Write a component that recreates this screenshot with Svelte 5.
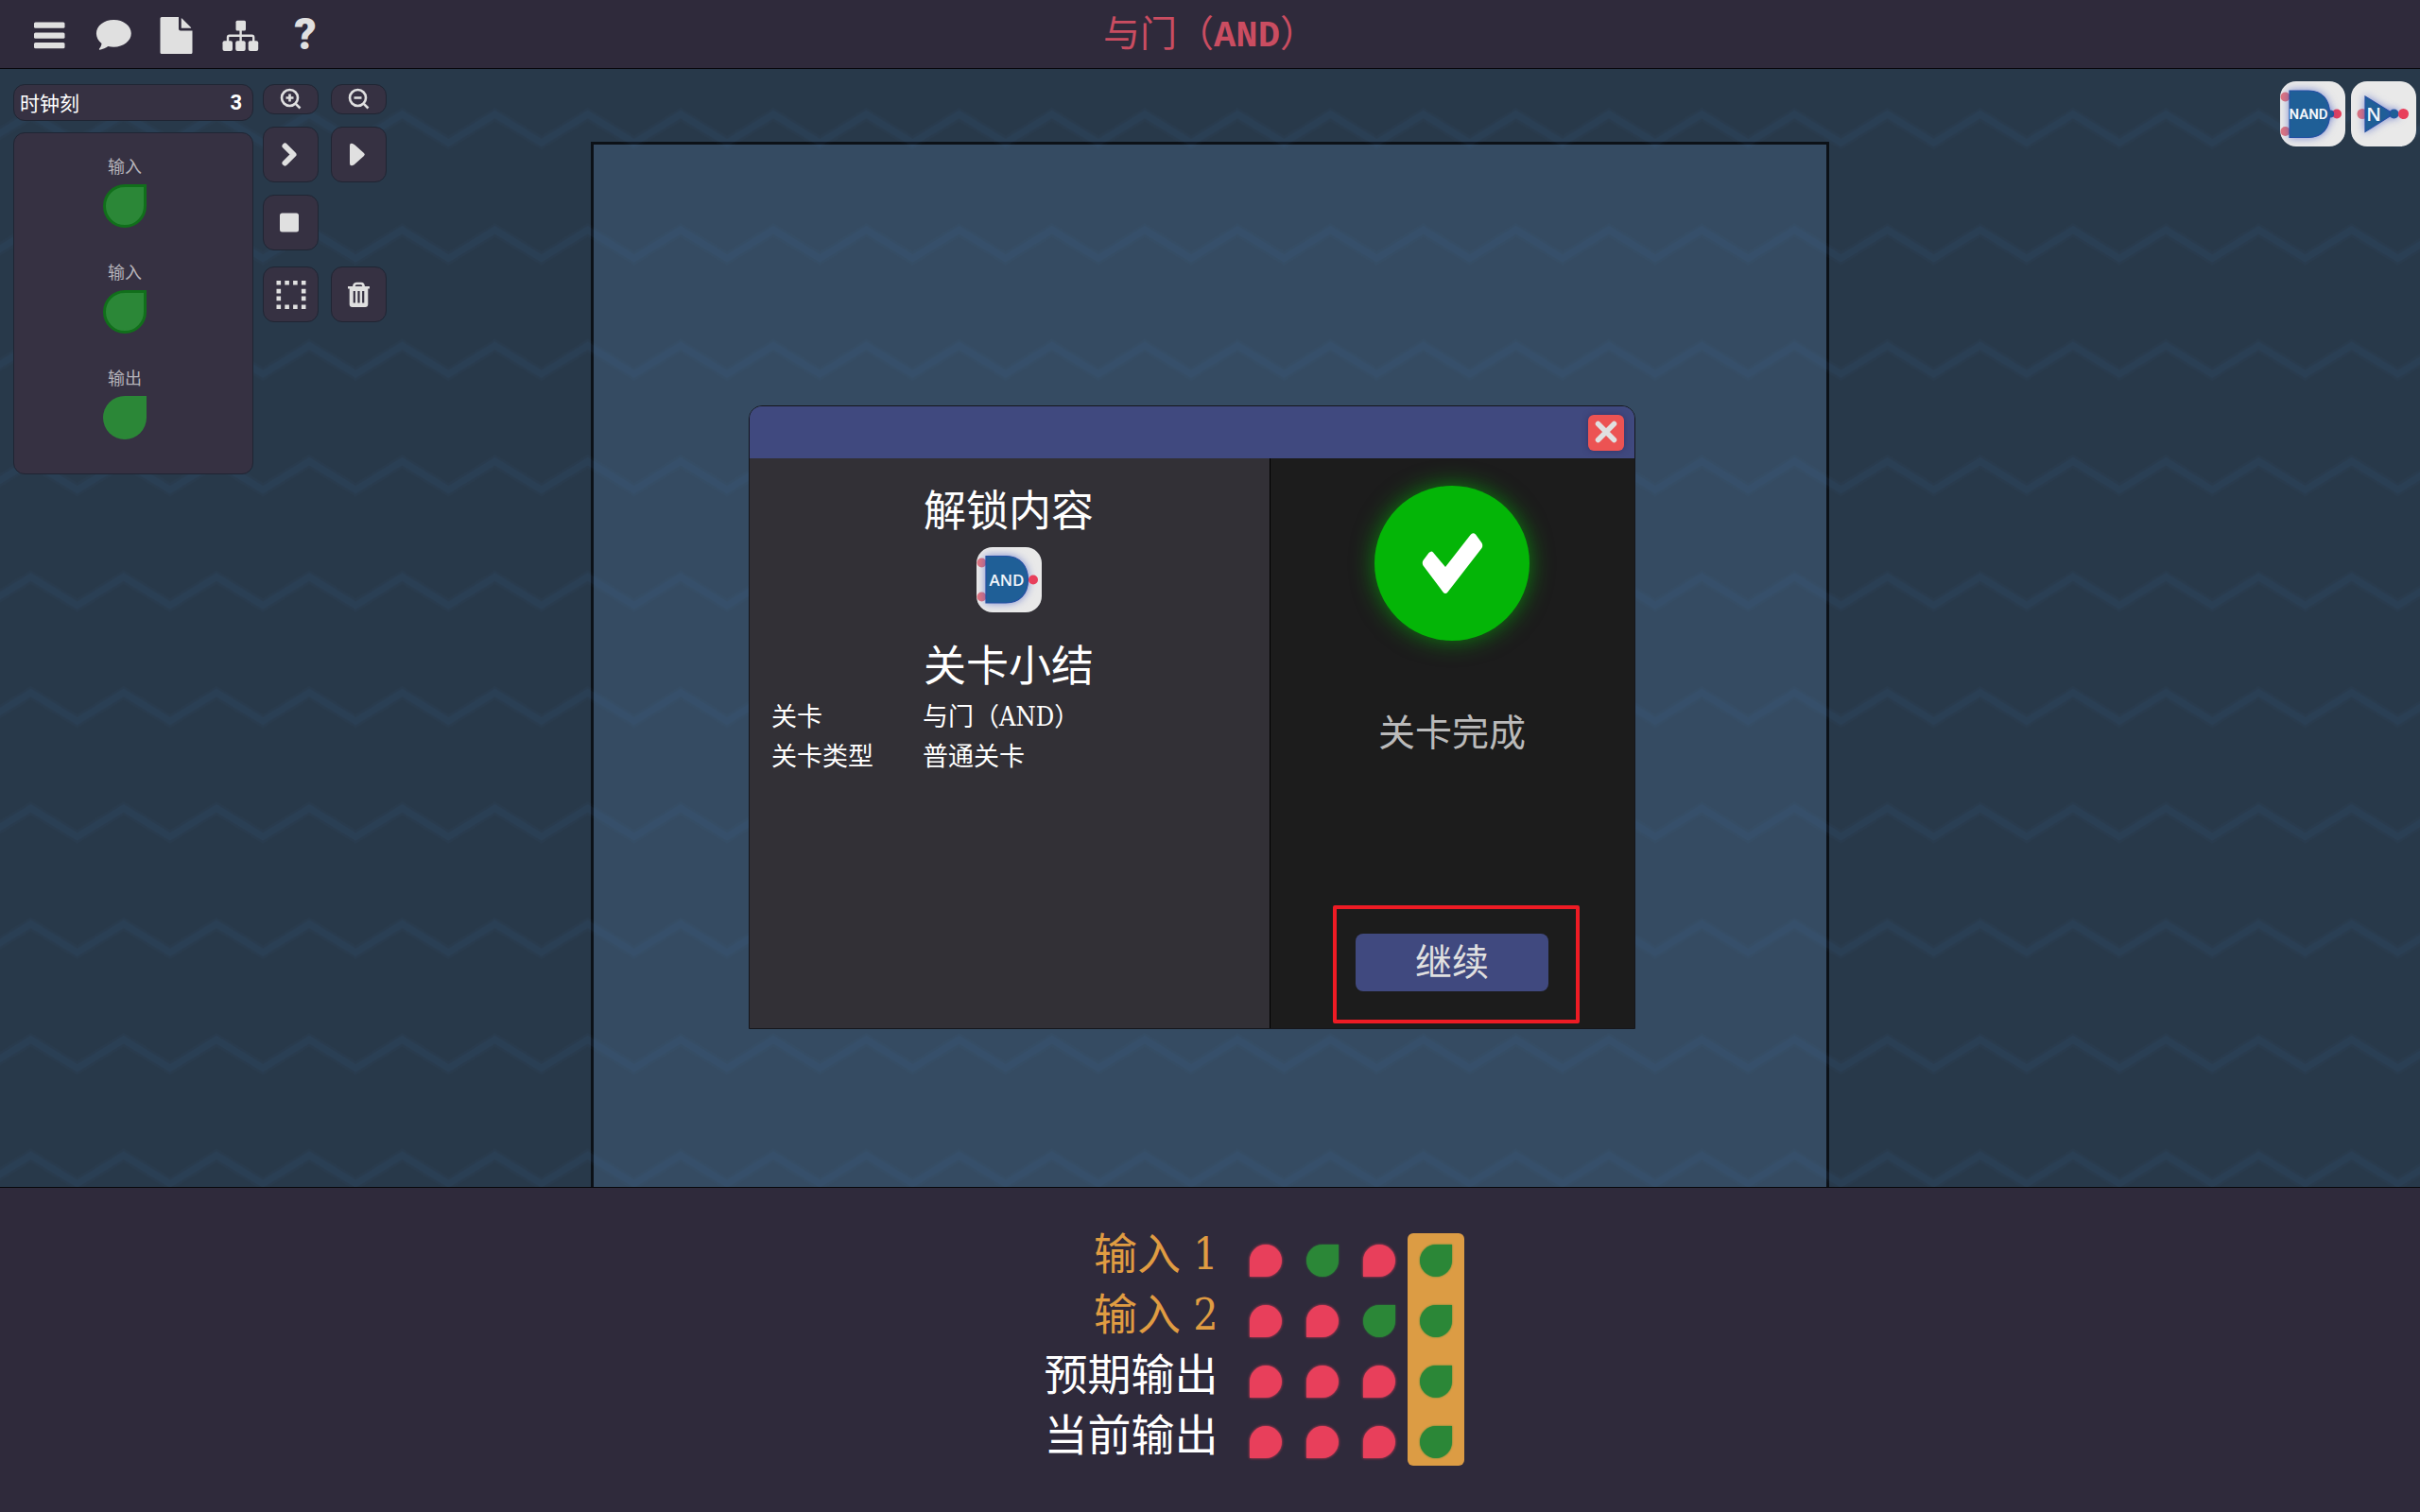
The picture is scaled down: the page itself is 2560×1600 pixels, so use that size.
<script>
	let {
		level = { name: "与门", code: "AND", type: "普通关卡" },
		tick = 3,
	} = $props();

	const pins = [
		{ label: "输入", editable: true },
		{ label: "输入", editable: true },
		{ label: "输出", editable: false },
	];

	const rows = [
		{ label: "输入 1", input: true, values: [0, 1, 0, 1] },
		{ label: "输入 2", input: true, values: [0, 0, 1, 1] },
		{ label: "预期输出", input: false, values: [0, 0, 0, 1] },
		{ label: "当前输出", input: false, values: [0, 0, 0, 1] },
	];

	const activeColumn = 3;
	let open = $state(true);
</script>

{#snippet gate(kind)}
	<svg class="gate" viewBox="0 0 69 69" aria-hidden="true">
		{#if kind === "N"}
			<circle class="port-in" cx="12" cy="34.5" r="5.5" />
			<path class="body" d="M15 16 L45 34.5 L15 53.5 Z" />
			<circle class="body" cx="45.5" cy="34.5" r="4.5" />
			<circle class="port-out" cx="55.5" cy="34.5" r="5.5" />
			<text x="24" y="42" font-size="20">N</text>
		{:else if kind === "NAND"}
			<circle class="port-in" cx="5.5" cy="16.5" r="5" />
			<circle class="port-in" cx="5.5" cy="53" r="5" />
			<path class="body" d="M10 10 H30 C45 10 52.5 20 52.5 34.5 C52.5 49 45 59.5 30 59.5 H10 Z" />
			<circle class="port-out" cx="60" cy="34.5" r="5" />
			<circle class="body" cx="53" cy="34.5" r="3.5" />
			<text class="narrow" x="30" y="40" font-size="15">NAND</text>
		{:else}
			<circle class="port-in" cx="5.5" cy="16.5" r="5" />
			<circle class="port-in" cx="5.5" cy="52.5" r="5" />
			<path class="body" d="M10 9.5 H31 C46 9.5 54.5 20 54.5 34.5 C54.5 49 46 59 31 59 H10 Z" />
			<circle class="port-out" cx="60" cy="34.5" r="5" />
			<text x="32" y="41" font-size="17">AND</text>
		{/if}
	</svg>
{/snippet}

<div class="game">
	<header class="topbar">
		<nav class="menu" aria-label="菜单">
			<button class="menu-button" aria-label="菜单">
				<svg viewBox="0 0 54 72">
					<rect x="12" y="23.5" width="32.5" height="6.2" rx="1.5" />
					<rect x="12" y="34.5" width="32.5" height="6.2" rx="1.5" />
					<rect x="12" y="45" width="32.5" height="6.2" rx="1.5" />
				</svg>
			</button>
			<button class="menu-button" aria-label="对话">
				<svg viewBox="0 0 54 72">
					<path d="M28.3 21 C38.6 21 46.8 27.3 46.8 35.3 C46.8 43.3 38.6 49.8 28.3 49.8 C26.2 49.8 24.2 49.5 22.3 49 C19.8 50.9 17 52 13.6 52.7 C12.8 52.8 12.6 52 13.2 51.3 C14.4 49.9 15.3 48.3 15.5 46 C12 43.3 9.9 39.5 9.9 35.3 C9.9 27.3 18 21 28.3 21 Z" />
				</svg>
			</button>
			<button class="menu-button" aria-label="文件">
				<svg viewBox="0 0 54 72">
					<path d="M11 18 H29 V30.5 Q29 32.5 31 32.5 H43.5 V55.5 Q43.5 57 42 57 H11 Q9.5 57 9.5 55.5 V19.5 Q9.5 18 11 18 Z M31.8 19.2 Q32.5 19.5 33 20 L41.5 28.5 Q42 29 42.2 29.7 H31.8 Z" />
				</svg>
			</button>
			<button class="menu-button" aria-label="关卡地图">
				<svg viewBox="0 0 54 72">
					<rect x="21.5" y="21.7" width="10.5" height="10.8" rx="1.5" />
					<rect x="7.5" y="43.2" width="10.5" height="10.8" rx="2" />
					<rect x="21.2" y="43.2" width="10.5" height="10.8" rx="2" />
					<rect x="34.7" y="43.2" width="10.5" height="10.8" rx="2" />
					<path class="line" d="M26.6 31 V44 M13 44 V39.5 Q13 37.8 14.7 37.8 H38.5 Q40.2 37.8 40.2 39.5 V44" />
				</svg>
			</button>
			<button class="menu-button help" aria-label="帮助">?</button>
		</nav>
		<h1 class="title">{level.name}（<b>{level.code}</b>）</h1>
	</header>

	<main class="stage">
		<div class="board"></div>
		<svg class="waves" aria-hidden="true">
			<defs>
				<pattern id="waves" width="98.2" height="122.4" patternUnits="userSpaceOnUse">
					<path class="soft" d="M-65.6 48 L-16.5 78 L32.6 48 L81.7 78 L130.8 48" />
					<path d="M-65.6 48 L-16.5 78 L32.6 48 L81.7 78 L130.8 48" />
				</pattern>
			</defs>
			<rect width="100%" height="100%" fill="url(#waves)" />
		</svg>

		<div class="overlay">
			<div class="side">
				<div class="clock">
					<span>时钟刻</span>
					<strong>{tick}</strong>
				</div>
				<div class="pins">
					{#each pins as pin}
						<div class="pin">
							<span class="pin-label">{pin.label}</span>
							{#if pin.editable}
								<button class="drop on large rim" aria-label={pin.label}></button>
							{:else}
								<span class="drop on large"></span>
							{/if}
						</div>
					{/each}
				</div>
			</div>

			<div class="tools">
				<div class="tool-group">
					<button class="tool short" aria-label="放大">
						<svg viewBox="0 0 24 24">
							<circle class="line" cx="10.5" cy="10.5" r="8.5" />
							<path class="line" d="M16.8 16.8 L21.5 21.5 M10.5 6.5 V14.5 M6.5 10.5 H14.5" />
						</svg>
					</button>
					<button class="tool short" aria-label="缩小">
						<svg viewBox="0 0 24 24">
							<circle class="line" cx="10.5" cy="10.5" r="8.5" />
							<path class="line" d="M16.8 16.8 L21.5 21.5 M6.5 10.5 H14.5" />
						</svg>
					</button>
					<button class="tool" aria-label="单步">
						<svg viewBox="0 0 32 32">
							<path class="chevron" d="M9.5 6.5 L18.5 15.5 L9.5 24.5" />
						</svg>
					</button>
					<button class="tool" aria-label="运行">
						<svg viewBox="0 0 32 32">
							<path d="M6 6 Q6 3 9 4 Q10.5 4.5 11.5 5.5 L21 14 Q22.7 15.5 21 17 L11.5 25.5 Q10.5 26.5 9 27 Q6 28 6 25 Z" />
						</svg>
					</button>
					<button class="tool" aria-label="停止">
						<svg viewBox="0 0 32 32">
							<rect x="4" y="5.5" width="20" height="20" rx="2.5" />
						</svg>
					</button>
				</div>
				<div class="tool-group">
					<button class="tool" aria-label="框选">
						<svg viewBox="0 0 32 32">
							<path class="dots" d="M.5 3.2 H31.5 M.5 28.8 H31.5" />
							<path class="dots solid" d="M2.8 9.8 V14.4 M2.8 17.6 V22.2 M29.2 9.8 V14.4 M29.2 17.6 V22.2" />
						</svg>
					</button>
					<button class="tool" aria-label="删除">
						<svg viewBox="0 0 32 32">
							<path class="line" d="M10.3 8 Q10.3 4 13 4 H18 Q20.7 4 20.7 8" />
							<path fill-rule="evenodd" d="M4 7 H27 V9.5 H25.3 V26 Q25.3 29 22.3 29 H8.7 Q5.7 29 5.7 26 V9.5 H4 Z M9.7 12 V24.5 H11.9 V12 Z M14.4 12 V24.5 H16.6 V12 Z M19.1 12 V24.5 H21.3 V12 Z" />
						</svg>
					</button>
				</div>
			</div>

			<div class="gates">
				<button class="chip" aria-label="NAND">{@render gate("NAND")}</button>
				<button class="chip" aria-label="N">{@render gate("N")}</button>
			</div>
		</div>

		{#if open}
			<div class="dialog" role="dialog" aria-label="关卡完成">
				<div class="dialog-bar">
					<button class="close" aria-label="关闭" onclick={() => (open = false)}>
						<svg viewBox="0 0 38 38">
							<path d="M10.5 9.5 L27.5 26.5 M27.5 9.5 L10.5 26.5" />
						</svg>
					</button>
				</div>
				<div class="dialog-body">
					<section class="summary">
						<h2>解锁内容</h2>
						<div class="chip">{@render gate("AND")}</div>
						<h2>关卡小结</h2>
						<table class="facts">
							<tbody>
								<tr>
									<th scope="row">关卡</th>
									<td>{level.name}（{level.code}）</td>
								</tr>
								<tr>
									<th scope="row">关卡类型</th>
									<td>{level.type}</td>
								</tr>
							</tbody>
						</table>
					</section>
					<section class="result">
						<div class="badge">
							<svg viewBox="0 0 164 164" aria-hidden="true">
								<path d="M60.5 69.5 Q61 69.5 62 70.5 L75 86 L101.5 52 Q104 49 107 51.5 L113.5 60.5 Q115 63 113.5 66 L77.5 112.5 Q75 115.5 72.5 112.5 L51.5 84.5 Q50 81.5 51.5 79 L57.5 71 Q59 69.5 60.5 69.5 Z" />
							</svg>
						</div>
						<p>关卡完成</p>
						<div class="continue-wrap">
							<button class="continue" onclick={() => (open = false)}>继续</button>
						</div>
					</section>
				</div>
			</div>
		{/if}
	</main>

	<footer class="truth">
		<table class="truth-table">
			<tbody>
				{#each rows as row}
					<tr>
						<th scope="row" class={[row.input && "is-input"]}>{row.label}</th>
						{#each row.values as value, i}
							<td class={[i === activeColumn && "is-active"]}>
								<span class={["drop", value ? "on" : "off"]} role="img" aria-label={String(value)}></span>
							</td>
						{/each}
					</tr>
				{/each}
			</tbody>
		</table>
	</footer>
</div>

<style>
	:global(body) {
		background: #2f2a3b;
	}

	.game {
		--bar: #2f2a3b;
		--panel: #363142;
		--icon: #e0e0e0;
		--accent: #40497f;
		min-height: 100vh;
		display: grid;
		grid-template-rows: auto 1fr auto;
		color: #fff;
		font-family: "DejaVu Serif Condensed", "DejaVu Serif", "Noto Sans CJK SC", serif;
	}

	h1,
	h2,
	p {
		margin: 0;
		font-weight: 400;
	}

	button {
		color: inherit;
		font: inherit;
		background: none;
		border: 0;
		padding: 0;
		cursor: pointer;
	}

	svg {
		display: block;
	}

	/* top bar */
	.topbar {
		display: grid;
		grid-template-columns: 1fr auto 1fr;
		height: 72px;
		background: var(--bar);
		border-bottom: 1px solid #07070b;
	}

	.menu {
		display: flex;
		gap: 14px;
		padding-left: 24px;
	}

	.menu-button {
		width: 54px;
		height: 72px;
		color: var(--icon);
	}

	.menu-button svg {
		width: 54px;
		height: 72px;
		fill: var(--icon);
	}

	.menu-button .line {
		fill: none;
		stroke: var(--icon);
		stroke-width: 2.4;
	}

	.help {
		font: 900 46px/72px Roboto, sans-serif;
	}

	.title {
		color: #ca4d61;
		font: 39px/64px "Noto Sans CJK SC", sans-serif;
	}

	.title b {
		font-family: "Liberation Mono", monospace;
	}

	/* stage */
	.stage {
		position: relative;
		background: #28394a;
		overflow: hidden;
	}

	.waves {
		position: absolute;
		inset: 0;
		width: 100%;
		height: 100%;
	}

	.waves path {
		fill: none;
		stroke: #3f78bc;
		stroke-opacity: 0.06;
		stroke-width: 7;
	}

	.waves .soft {
		stroke-opacity: 0.03;
		stroke-width: 12;
	}

	.board {
		box-sizing: border-box;
		width: 51.2%;
		height: 100%;
		margin: 77px auto 0;
		background: #354b62;
		border: 3px solid #0c1117;
	}

	.overlay {
		position: absolute;
		inset: 0;
		display: flex;
		align-items: flex-start;
		gap: 10px;
		padding: 16px 4px 0 14px;
	}

	.side {
		display: flex;
		flex-direction: column;
		gap: 12px;
		width: 254px;
	}

	.clock,
	.pins,
	.tool {
		box-sizing: border-box;
		background: var(--panel);
		border: 1px solid #1f2533;
		border-radius: 12px;
	}

	.clock {
		display: flex;
		justify-content: space-between;
		align-items: center;
		height: 39px;
		padding: 0 11px 0 6px;
		font: 21px/37px "Noto Sans CJK SC", sans-serif;
	}

	.clock strong {
		font: 700 22px/37px Roboto, sans-serif;
	}

	.pins {
		display: flex;
		flex-direction: column;
		gap: 34px;
		padding: 22px 18px 36px 0;
	}

	.pin {
		display: flex;
		flex-direction: column;
		align-items: center;
		gap: 8px;
	}

	.pin-label {
		color: #b5b3ba;
		font: 18px/24px "Noto Sans CJK SC", sans-serif;
	}

	.drop {
		display: block;
		box-sizing: border-box;
		width: 34px;
		height: 34px;
	}

	.drop.on {
		background: #2b8737;
		border-radius: 50% 0 50% 50%;
		box-shadow: 0 0 2px #2b8737;
	}

	.drop.off {
		background: #e83f5b;
		border-radius: 50% 50% 50% 0;
		box-shadow: 0 0 3px #e83f5b;
	}

	.drop.large {
		width: 46px;
		height: 46px;
		box-shadow: none;
	}

	.drop.rim {
		border: 3px solid #116f1b;
	}

	.tools {
		display: flex;
		flex-direction: column;
		gap: 17px;
	}

	.tool-group {
		display: grid;
		grid-template-columns: 59px 59px;
		gap: 13px;
	}

	.tool {
		display: flex;
		justify-content: center;
		align-items: center;
		height: 59px;
	}

	.tool.short {
		height: 32px;
	}

	.tool svg {
		width: 32px;
		height: 32px;
		fill: var(--icon);
	}

	.tool.short svg {
		width: 24px;
		height: 24px;
	}

	.tool .line,
	.tool .chevron,
	.tool .dots {
		fill: none;
		stroke: var(--icon);
		stroke-width: 2.6;
	}

	.tool .chevron {
		stroke-width: 6;
		stroke-linecap: round;
		stroke-linejoin: round;
	}

	.tool .dots {
		stroke-width: 4.6;
		stroke-dasharray: 4.6 4.2;
	}

	.tool .solid {
		stroke-dasharray: none;
	}

	.gates {
		display: flex;
		gap: 6px;
		margin: -3px 0 0 auto;
	}

	.chip {
		width: 69px;
		height: 69px;
		background: #e9e9e9;
		border-radius: 17px;
		overflow: hidden;
	}

	.gate .body {
		fill: #1f5f97;
		stroke: #2450a4;
		stroke-width: 1.2;
		filter: drop-shadow(0 0 4px rgb(45 70 190 / 60%));
	}

	.gate .port-in {
		fill: #dd7480;
	}

	.gate .port-out {
		fill: #e83f5b;
	}

	.gate text {
		fill: #f2f5fa;
		font-family: "Open Sans", "Noto Sans", sans-serif;
		font-weight: 600;
		text-anchor: middle;
	}

	.gate .narrow {
		font-family: "Liberation Sans Narrow", Roboto, sans-serif;
	}

	/* level complete dialog */
	.dialog {
		position: absolute;
		top: 356px;
		left: calc(50% - 488px);
		box-sizing: border-box;
		display: grid;
		grid-template-rows: auto 1fr;
		width: 938px;
		min-height: 660px;
		border: 1px solid #15161c;
		border-radius: 14px 14px 0 0;
		overflow: hidden;
	}

	.dialog-bar {
		display: flex;
		justify-content: flex-end;
		padding: 9px 11px 8px;
		background: var(--accent);
	}

	.close {
		width: 38px;
		height: 38px;
		background: #ec5353;
		border-radius: 6px;
		box-shadow: 0 0 6px rgb(40 30 80 / 50%);
	}

	.close path {
		fill: none;
		stroke: #e0e0e0;
		stroke-width: 5.5;
		stroke-linecap: round;
	}

	.dialog-body {
		display: grid;
		grid-template-columns: 550fr 386fr;
	}

	.summary {
		display: flex;
		flex-direction: column;
		align-items: center;
		padding: 25px 25px 0 23px;
		background: #323036;
	}

	.summary h2 {
		font-size: 45px;
		line-height: 64px;
	}

	.summary .chip {
		margin: 5px 0 26px;
	}

	.facts {
		align-self: stretch;
		border-collapse: collapse;
		font-size: 27px;
		line-height: 42px;
	}

	.facts th,
	.facts td {
		padding: 0;
		font-weight: 400;
		text-align: left;
	}

	.facts th {
		width: 160px;
	}

	.result {
		display: flex;
		flex-direction: column;
		align-items: center;
		background: #1c1c1c;
		border-left: 1px solid #000;
		padding: 29px 1px 39px 0;
	}

	.badge {
		width: 164px;
		height: 164px;
		background: #04b507;
		border-radius: 50%;
		box-shadow: 0 0 24px rgb(4 181 7 / 65%);
	}

	.badge path {
		fill: #fff;
	}

	.result p {
		margin-top: 70px;
		color: #bababa;
		font-size: 39px;
		line-height: 56px;
	}

	.continue-wrap {
		position: relative;
		margin-top: auto;
	}

	.continue-wrap::after {
		content: "";
		position: absolute;
		inset: -30px -33px -34px -24px;
		border: 4px solid #ee1b24;
		border-radius: 2px;
		pointer-events: none;
	}

	.continue {
		display: block;
		width: 204px;
		height: 61px;
		color: #e0e0e0;
		font-size: 39px;
		line-height: 60px;
		background: var(--accent);
		border-radius: 8px;
	}

	/* truth table */
	.truth {
		display: flex;
		justify-content: center;
		padding: 48px 0 49px 93px;
		background: var(--bar);
		border-top: 1px solid #07070b;
	}

	.truth-table {
		border-collapse: separate;
		border-spacing: 0;
	}

	.truth-table tr {
		height: 64px;
	}

	.truth-table tr:last-child {
		height: 54px;
	}

	.truth-table th {
		padding: 0 20px 0 0;
		font-size: 46px;
		font-weight: 400;
		line-height: 44px;
		text-align: right;
		vertical-align: top;
	}

	.truth-table .is-input {
		color: #e09c42;
	}

	.truth-table td {
		box-sizing: border-box;
		width: 60px;
		padding: 12px 13px 0;
		vertical-align: top;
	}

	.truth-table .is-active {
		background: #dc9c44;
	}

	.truth-table tr:first-child .is-active {
		border-radius: 6px 6px 0 0;
	}

	.truth-table tr:last-child .is-active {
		border-radius: 0 0 6px 6px;
	}
</style>
